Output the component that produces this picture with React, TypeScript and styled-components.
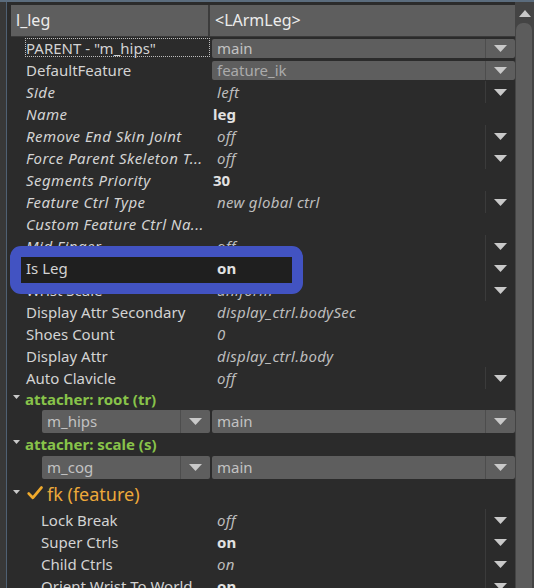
import styled, { createGlobalStyle } from "styled-components";

type Prop = {
  label: string;
  value?: string;
  labelItalic?: boolean;
  valueStyle?: "italic" | "bold";
  valuePad?: number;
  dropdown?: boolean;
  highlight?: boolean;
};

const mainProps: Prop[] = [
  { label: "Side", value: "left", labelItalic: true, valueStyle: "italic", dropdown: true },
  { label: "Name", value: "leg", labelItalic: true, valueStyle: "bold", valuePad: 1 },
  { label: "Remove End Skin Joint", value: "off", labelItalic: true, valueStyle: "italic", dropdown: true },
  { label: "Force Parent Skeleton T...", value: "off", labelItalic: true, valueStyle: "italic", dropdown: true },
  { label: "Segments Priority", value: "30", labelItalic: true, valueStyle: "bold", valuePad: 1 },
  { label: "Feature Ctrl Type", value: "new global ctrl", labelItalic: true, valueStyle: "italic", dropdown: true },
  { label: "Custom Feature Ctrl Na...", labelItalic: true },
  { label: "Mid Finger", value: "off", labelItalic: true, valueStyle: "italic", dropdown: true },
  { label: "Is Leg", value: "on", valueStyle: "bold", dropdown: true, highlight: true },
  { label: "Wrist Scale", value: "uniform", valueStyle: "italic", dropdown: true },
  { label: "Display Attr Secondary", value: "display_ctrl.bodySec", valueStyle: "italic" },
  { label: "Shoes Count", value: "0", valueStyle: "italic" },
  { label: "Display Attr", value: "display_ctrl.body", valueStyle: "italic" },
  { label: "Auto Clavicle", value: "off", valueStyle: "italic", dropdown: true },
];

const fkProps: Prop[] = [
  { label: "Lock Break", value: "off", valueStyle: "italic", dropdown: true },
  { label: "Super Ctrls", value: "on", valueStyle: "bold", dropdown: true },
  { label: "Child Ctrls", value: "on", valueStyle: "italic", dropdown: true },
  { label: "Orient Wrist To World", value: "on", valueStyle: "bold", dropdown: true },
];

const DownArrow = ({ size = 13 }: { size?: number }) => (
  <svg width={size} height={Math.round(size * 0.55)} viewBox="0 0 13 7">
    <polygon points="0,0 13,0 6.5,7" fill="#c9c9c9" />
  </svg>
);

const CheckMark = () => (
  <svg width="16" height="14" viewBox="0 0 16 14">
    <path
      d="M1.8 7.6 L5.8 11.8 L14.4 1.6"
      stroke="#f0aa2c"
      strokeWidth="2.8"
      strokeLinecap="round"
      strokeLinejoin="round"
      fill="none"
    />
  </svg>
);

const PropRow = ({ p, indent }: { p: Prop; indent: number }) => (
  <Row $lifted={p.highlight}>
    {p.highlight && <Highlight />}
    <Label $indent={indent} $italic={p.labelItalic} $lift={p.highlight}>
      <LabelText>{p.label}</LabelText>
    </Label>
    <ValueCell $lift={p.highlight}>
      <ValueText $kind={p.valueStyle} $pad={p.valuePad}>
        {p.value}
      </ValueText>
      {p.dropdown && (
        <ArrowSlot $line="#3b3b3b">
          <DownArrow />
        </ArrowSlot>
      )}
    </ValueCell>
  </Row>
);

const Combo = ({ text, dim, height }: { text: string; dim?: boolean; height: number }) => (
  <ComboBox $h={height}>
    <ComboText $dim={dim}>{text}</ComboText>
    <ArrowSlot $line="#4d4d4d">
      <DownArrow />
    </ArrowSlot>
  </ComboBox>
);

const Attacher = ({ title, target }: { title: string; target: string }) => (
  <>
    <SectionRow $h={title.includes("root") ? 20 : 22}>
      <Expander>
        <DownArrow size={7} />
      </Expander>
      <AttacherTitle>{title}</AttacherTitle>
    </SectionRow>
    <Row $h={24}>
      <Label $indent={31}>
        <Combo text={target} height={23} />
      </Label>
      <ValueCell>
        <Combo text="main" height={23} />
      </ValueCell>
    </Row>
  </>
);

const App = () => {
  return (
    <>
      <GlobalStyle />
      <Frame>
        <Panel>
          <Header>
            <HeaderCell $first>l_leg</HeaderCell>
            <HeaderCell>&lt;LArmLeg&gt;</HeaderCell>
          </Header>

          <Row>
            <Label $indent={14}>
              <LabelText $focused>PARENT - "m_hips"</LabelText>
            </Label>
            <ValueCell>
              <Combo text="main" height={19} />
            </ValueCell>
          </Row>
          <Row>
            <Label $indent={15}>
              <LabelText>DefaultFeature</LabelText>
            </Label>
            <ValueCell>
              <Combo text="feature_ik" dim height={19} />
            </ValueCell>
          </Row>

          {mainProps.map((p) => (
            <PropRow key={p.label} p={p} indent={15} />
          ))}

          <Attacher title="attacher: root (tr)" target="m_hips" />
          <Attacher title="attacher: scale (s)" target="m_cog" />

          <SectionRow $h={30}>
            <Expander>
              <DownArrow size={7} />
            </Expander>
            <Check>
              <CheckMark />
            </Check>
            <FeatureTitle>fk (feature)</FeatureTitle>
          </SectionRow>

          {fkProps.map((p) => (
            <PropRow key={p.label} p={p} indent={30} />
          ))}
        </Panel>

        <ScrollBar>
          <ScrollUp>
            <svg width="12" height="7" viewBox="0 0 12 7">
              <polygon points="0,7 12,7 6,0" fill="#c9c9c9" />
            </svg>
          </ScrollUp>
          <Thumb />
        </ScrollBar>
      </Frame>
    </>
  );
};

const GlobalStyle = createGlobalStyle`
  html, body {
    margin: 0;
    padding: 0;
    background: #383838;
  }
  body {
    font-family: "Noto Sans", "Open Sans", sans-serif;
  }
`;

const Frame = styled.div`
  display: flex;
  width: 534px;
  height: 588px;
  overflow: hidden;
  box-sizing: border-box;
  border-top: 2px solid #5b6c7d;
  padding-left: 6px;
  background: #383838;
`;

const Panel = styled.div`
  flex: 1;
  display: flex;
  flex-direction: column;
  padding: 3px 0 0 3px;
  border-left: 1px solid #4f6073;
  background: #2b2b2b;
  min-width: 0;
`;

const Header = styled.div`
  display: flex;
  flex-shrink: 0;
  height: 31px;
  margin-left: 1px;
  background: #5e5e5e;
  border-bottom: 1px solid #3a3a3a;
`;

const HeaderCell = styled.div<{ $first?: boolean }>`
  width: ${(p) => (p.$first ? "199px" : "auto")};
  flex: ${(p) => (p.$first ? "none" : 1)};
  box-sizing: border-box;
  border-right: ${(p) => (p.$first ? "2px solid #3c3c3c" : "none")};
  padding-left: 5px;
  line-height: 31px;
  font-size: 16px;
  color: #ececec;
`;

const Row = styled.div<{ $h?: number; $lifted?: boolean }>`
  position: ${(p) => (p.$lifted ? "relative" : "static")};
  display: flex;
  flex-shrink: 0;
  align-items: center;
  height: ${(p) => p.$h ?? 22}px;
  margin-left: 1px;
`;

const Highlight = styled.div`
  position: absolute;
  left: -1px;
  top: -11px;
  width: 293px;
  height: 48px;
  box-sizing: border-box;
  border: 11px solid #4253c2;
  border-radius: 11px;
  background: #1f1f1f;
`;

const Label = styled.div<{ $indent: number; $italic?: boolean; $lift?: boolean }>`
  position: ${(p) => (p.$lift ? "relative" : "static")};
  display: flex;
  align-items: center;
  align-self: stretch;
  width: 199px;
  flex-shrink: 0;
  box-sizing: border-box;
  padding-left: ${(p) => p.$indent}px;
  font-size: 15px;
  font-style: ${(p) => (p.$italic ? "italic" : "normal")};
  letter-spacing: ${(p) => (p.$italic ? "0.45px" : "0")};
  color: #d3d3d3;
  white-space: nowrap;
  overflow: hidden;
`;

const LabelText = styled.span<{ $focused?: boolean }>`
  flex: ${(p) => (p.$focused ? 1 : "none")};
  align-self: ${(p) => (p.$focused ? "stretch" : "auto")};
  display: flex;
  align-items: center;
  margin: ${(p) => (p.$focused ? "1px 0 2px" : "0")};
  border: ${(p) => (p.$focused ? "1px dotted #bdbdbd" : "none")};
`;

const ValueCell = styled.div<{ $lift?: boolean }>`
  position: ${(p) => (p.$lift ? "relative" : "static")};
  display: flex;
  align-items: center;
  align-self: stretch;
  flex: 1;
  margin-left: 2px;
`;

const ValueText = styled.span<{ $kind?: "italic" | "bold"; $pad?: number }>`
  flex: 1;
  padding-left: ${(p) => p.$pad ?? 5}px;
  font-size: 15px;
  font-style: ${(p) => (p.$kind === "italic" ? "italic" : "normal")};
  letter-spacing: ${(p) => (p.$kind === "italic" ? "0.3px" : "0")};
  font-weight: ${(p) => (p.$kind === "bold" ? 700 : 400)};
  color: ${(p) => (p.$kind === "bold" ? "#e2e2e2" : "#bdbdbd")};
  white-space: nowrap;
`;

const ArrowSlot = styled.div<{ $line: string }>`
  display: flex;
  align-items: center;
  justify-content: center;
  align-self: stretch;
  width: 30px;
  box-sizing: border-box;
  border-left: 1px solid ${(p) => p.$line};
`;

const ComboBox = styled.div<{ $h: number }>`
  display: flex;
  align-items: center;
  flex: 1;
  height: ${(p) => p.$h}px;
  background: #5e5e5e;
  border-radius: 2px;
`;

const ComboText = styled.span<{ $dim?: boolean }>`
  flex: 1;
  padding-left: 5px;
  font-size: 15px;
  color: ${(p) => (p.$dim ? "#ababab" : "#c2c2c2")};
  white-space: nowrap;
`;

const SectionRow = styled.div<{ $h: number }>`
  display: flex;
  flex-shrink: 0;
  align-items: center;
  height: ${(p) => p.$h}px;
  padding-left: 3px;
`;

const Expander = styled.span`
  display: flex;
  width: 12px;
  margin-top: -5px;
`;

const AttacherTitle = styled.span`
  font-size: 15px;
  font-weight: 700;
  color: #88c34a;
`;

const Check = styled.span`
  display: flex;
  width: 20px;
  margin-left: 2px;
  margin-top: -2px;
`;

const FeatureTitle = styled.span`
  font-size: 18px;
  color: #eda93a;
`;

const ScrollBar = styled.div`
  display: flex;
  flex-direction: column;
  width: 19px;
  flex-shrink: 0;
  background: #444444;
`;

const ScrollUp = styled.div`
  display: flex;
  justify-content: center;
  height: 21px;
  padding-top: 8px;
  box-sizing: border-box;
`;

const Thumb = styled.div`
  flex: 1;
  width: 16px;
  margin-left: 1px;
  background: #5c5c5c;
  border-radius: 7px 7px 0 0;
`;

export default App;
